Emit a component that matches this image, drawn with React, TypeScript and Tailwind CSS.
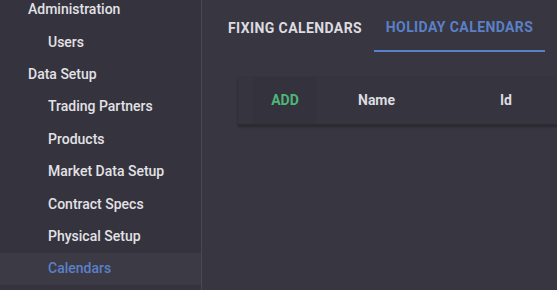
import React from "react";

const items = [
  { label: "Administration", header: true },
  { label: "Users" },
  { label: "Data Setup", header: true },
  { label: "Trading Partners" },
  { label: "Products" },
  { label: "Market Data Setup" },
  { label: "Contract Specs" },
  { label: "Physical Setup" },
  { label: "Calendars", active: true },
  { label: "", },
];

export default function App() {
  return (
    <div
      className="flex h-[290px] w-[557px] overflow-hidden bg-[#383640] text-[14px]"
      style={{ fontFamily: "Roboto, 'Liberation Sans', sans-serif" }}
    >
      <aside className="w-[202px] shrink-0 border-r border-[#4a4852] bg-[#35333d] -mt-[6.5px]">
        {items.map((it, i) => (
          <div
            key={i}
            className={`flex h-[32.4px] items-center font-medium ${
              it.header ? "pl-[28px]" : "pl-[48px]"
            } ${it.active ? "bg-[#3c3a45] text-[#5a80c8]" : "text-[#e2e2e6]"}`}
          >
            {it.label}
          </div>
        ))}
      </aside>
      <main className="flex-1 pl-[14px] pt-[4px]">
        <div className="flex h-[48px]">
          <div className="flex h-full items-center px-[12px] font-bold uppercase tracking-[0.4px] text-[#dcdce0]">
            Fixing Calendars
          </div>
          <div className="flex h-full w-[171px] items-center justify-center border-b-2 border-[#5a80c8] font-bold uppercase tracking-[0.4px] text-[#5a80c8]">
            Holiday Calendars
          </div>
        </div>
        <div className="ml-[22px] mt-[25px] flex h-[49px] items-center border-b-2 border-[#2c2b32] bg-[#36343e] font-bold shadow-[0_1px_2px_rgba(0,0,0,0.3)]">
          <div className="flex h-full w-[64px] ml-[15px] items-center justify-center bg-[#34323c] text-[#4fb679]">
            ADD
          </div>
          <div className="ml-[41px] w-[142px] text-[#dcdce0]">Name</div>
          <div className="text-[#dcdce0]">Id</div>
        </div>
      </main>
    </div>
  );
}
